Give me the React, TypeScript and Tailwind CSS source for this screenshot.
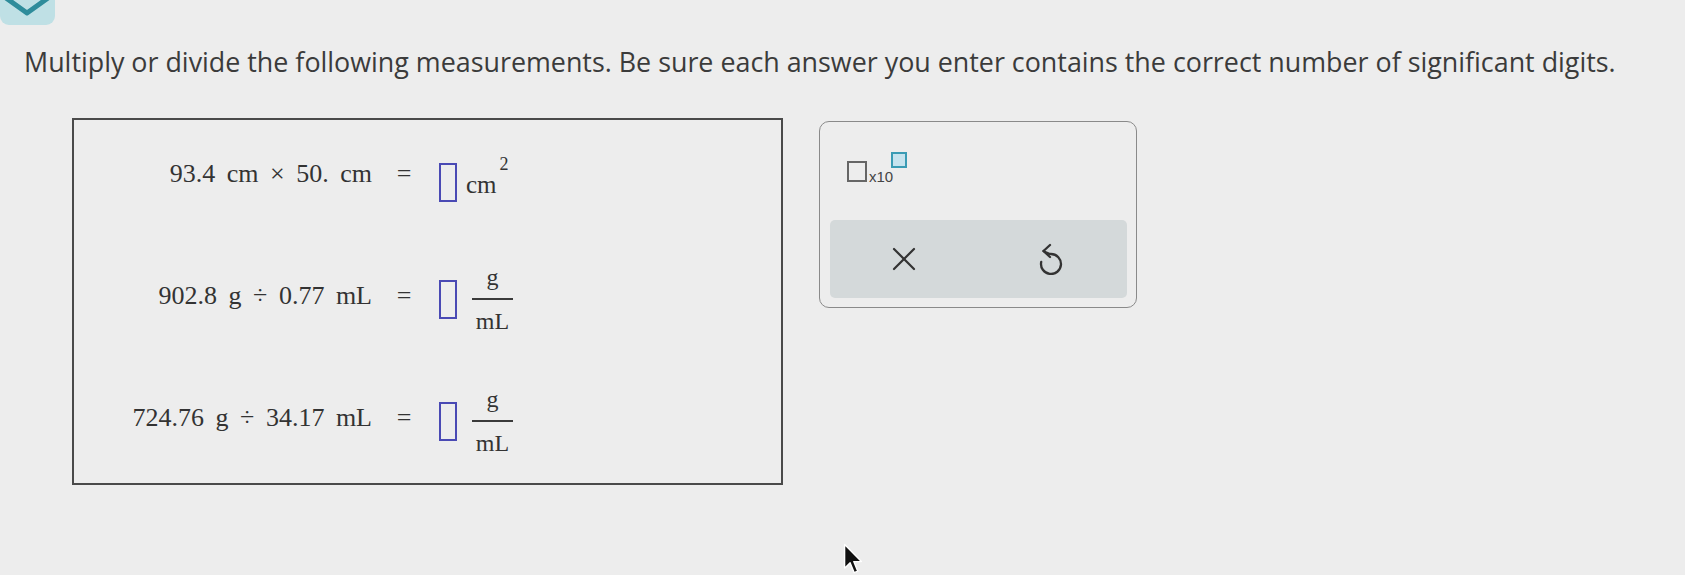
import React from 'react'

const serif = { fontFamily: '"Liberation Serif", "Times New Roman", serif' }

const AnswerBox: React.FC = () => (
  <div className="w-[18px] h-[39px] border-2 border-[#4a4ab4] shrink-0" />
)

const Fraction: React.FC<{ top: string; bottom: string }> = ({ top, bottom }) => (
  <div className="ml-[15px] w-[41px] flex flex-col items-center text-[24px] leading-none">
    <span className="mb-[9px]">{top}</span>
    <div className="w-full h-[1.5px] bg-[#3a3a3a]" />
    <span className="mt-[9px]">{bottom}</span>
  </div>
)

interface Row {
  left: string[]
  kind: 'square' | 'fraction'
  shift: string
}

const rows: Row[] = [
  { left: ['93.4', 'cm', '×', '50.', 'cm'], kind: 'square', shift: 'mt-[16px]' },
  { left: ['902.8', 'g', '÷', '0.77', 'mL'], kind: 'fraction', shift: 'mt-[6px]' },
  { left: ['724.76', 'g', '÷', '34.17', 'mL'], kind: 'fraction', shift: 'mt-[6px]' },
]

const UndoIcon: React.FC = () => (
  <svg width="28" height="32" viewBox="0 0 28 32" fill="none" stroke="#333" strokeWidth="2.3" strokeLinecap="round" strokeLinejoin="round">
    <path d="M12 2 L5.5 8 L12 14" />
    <path d="M5.5 8 C8 9.6 10.2 11 13 11 A10 10 0 1 1 3.2 19" />
  </svg>
)

const CloseIcon: React.FC = () => (
  <svg width="24" height="24" viewBox="0 0 24 24" fill="none" stroke="#333" strokeWidth="2.2" strokeLinecap="round">
    <path d="M2 2 L22 22" />
    <path d="M22 2 L2 22" />
  </svg>
)

const Cursor: React.FC = () => (
  <svg width="20" height="32" viewBox="0 0 13 21" className="absolute left-[843px] top-[543px]">
    <path d="M1 1 L1 16.5 L4.6 13 L7.3 19.5 L9.6 18.5 L7 12.2 L12 12.2 Z" fill="#111" stroke="#fff" strokeWidth="0.9" strokeLinejoin="round" />
  </svg>
)

export default function App() {
  return (
    <div className="relative w-full min-h-screen h-[575px] bg-[#ededed] overflow-hidden text-[#333]">
      {/* collapsed toggle tab */}
      <div className="w-[55px] h-[25px] bg-[#bfe0e5] rounded-b-[9px] overflow-hidden">
        <svg width="55" height="25" viewBox="0 0 55 25" fill="none">
          <path d="M6 -2 L27 13 L48 -2" stroke="#2e8c9b" strokeWidth="5" strokeLinejoin="round" />
        </svg>
      </div>

      <p
        className="ml-[24px] mt-[21px] text-[26.85px] leading-[32px] text-[#3b3b3b] whitespace-nowrap"
        style={{ fontFamily: '"Open Sans", "DejaVu Sans", sans-serif' }}
      >
        Multiply or divide the following measurements. Be sure each answer you enter contains the correct number of significant digits.
      </p>

      <div className="flex items-start ml-[72px] mt-[40px]">
        {/* equations */}
        <div className="w-[711px] h-[367px] border-2 border-[#4a4a4a] pt-[24px] flex flex-col gap-[62px] text-[#333]" style={serif}>
          {rows.map((r, i) => (
            <div key={i} className="h-[60px] flex items-center">
              <div className="w-[298px] flex justify-end gap-[11.5px] text-[26px] leading-none">
                {r.left.map((t, j) => (
                  <span key={j}>{t}</span>
                ))}
              </div>
              <div className="w-[64px] text-center text-[26px] leading-none">=</div>
              <div className={`flex items-center ml-[3px] ${r.shift}`}>
                <AnswerBox />
                {r.kind === 'square' ? (
                  <>
                    <span className="self-end mb-[5px] ml-[9px] text-[25px] leading-none">cm</span>
                    <span className="self-start -mt-[8px] ml-[3px] text-[18px] leading-none">2</span>
                  </>
                ) : (
                  <Fraction top="g" bottom="mL" />
                )}
              </div>
            </div>
          ))}
        </div>

        {/* answer tools */}
        <div className="ml-[36px] mt-[3px] w-[318px] h-[187px] border-[1.5px] border-[#8a8a8a] rounded-[10px] flex flex-col">
          <div className="ml-[27px] mt-[30px] flex items-start" style={{ fontFamily: '"Liberation Sans", Arial, sans-serif' }}>
            <div className="mt-[9px] w-[20px] h-[21px] border-2 border-[#666]" />
            <span className="self-end -mb-[2px] ml-[2px] text-[15px] leading-none text-[#444]">x10</span>
            <div className="-ml-[2px] w-[16px] h-[16px] border-2 border-[#3a9bb4] bg-[#c6e3ee]" />
          </div>
          <div className="mt-auto mx-[9.5px] mb-[9.5px] h-[78px] rounded-[5px] bg-[#d4d9da] grid grid-cols-2 items-center justify-items-center">
            <CloseIcon />
            <UndoIcon />
          </div>
        </div>
      </div>

      <Cursor />
    </div>
  )
}
